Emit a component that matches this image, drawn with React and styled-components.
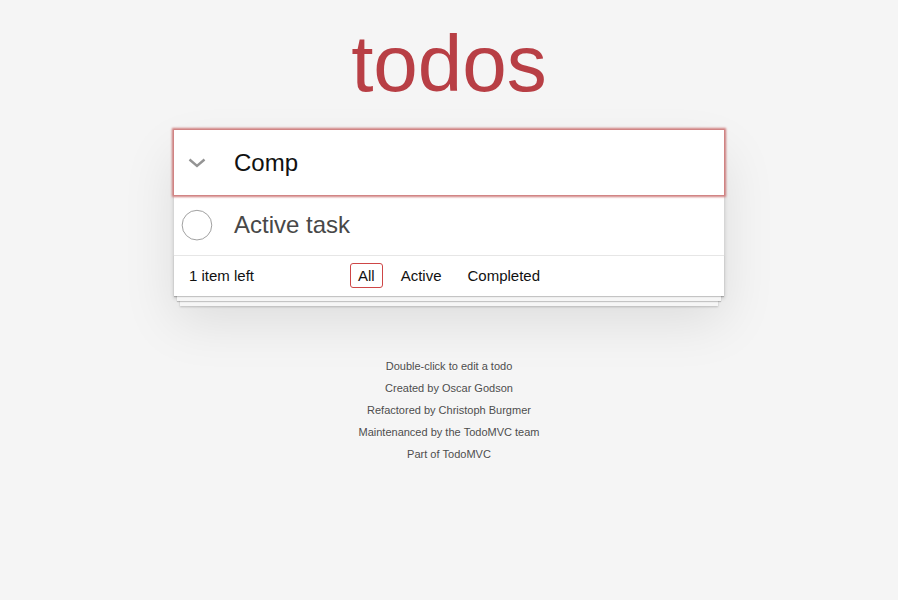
import { useState } from "react";
import styled, { createGlobalStyle } from "styled-components";

const GlobalStyle = createGlobalStyle`
  html,
  body {
    margin: 0;
    padding: 0;
  }

  body {
    font: 14px "Liberation Sans", Helvetica, Arial, sans-serif;
    line-height: 1.4em;
    background: #f5f5f5;
    color: #111111;
    font-weight: 300;
  }
`;

const Page = styled.div`
  min-width: 230px;
  max-width: 550px;
  margin: 0 auto;
`;

const Title = styled.h1`
  margin: 0;
  padding-top: 24px;
  height: 106px;
  font-size: 80px;
  line-height: 80px;
  font-weight: 200;
  text-align: center;
  color: #b83f45;
`;

const TodoApp = styled.section`
  background: #fff;
  margin: 0 0 40px 0;
  box-shadow: 0 2px 4px 0 rgba(0, 0, 0, 0.2), 0 25px 50px 0 rgba(0, 0, 0, 0.1);
`;

const Header = styled.header`
  position: relative;
  z-index: 1;
  display: flex;
  height: 65px;
  background: #fff;
  box-shadow: ${(p) =>
    p.$focused ? "0 0 2px 2px #cf7d7d" : "inset 0 -2px 1px rgba(0, 0, 0, 0.03)"};
`;

const ToggleAll = styled.button`
  width: 45px;
  height: 65px;
  flex-shrink: 0;
  display: flex;
  align-items: center;
  justify-content: center;
  border: none;
  background: none;
  padding: 0;
  cursor: pointer;
`;

const NewTodo = styled.input`
  flex: 1;
  min-width: 0;
  height: 65px;
  box-sizing: border-box;
  padding: 16px 16px 16px 15px;
  border: none;
  outline: none;
  background: transparent;
  font-family: inherit;
  font-size: 24px;
  font-weight: inherit;
  line-height: 1.4em;
  color: inherit;
`;

const TodoList = styled.ul`
  margin: 0;
  padding: 0;
  list-style: none;
`;

const TodoItem = styled.li`
  display: flex;
  align-items: center;
  font-size: 24px;
  border-bottom: 1px solid #ededed;

  &:last-child {
    border-bottom: none;
  }
`;

const ItemToggle = styled.button`
  display: flex;
  width: 40px;
  height: 40px;
  flex-shrink: 0;
  margin-top: 1px;
  padding: 0;
  border: none;
  background: none;
  cursor: pointer;
`;

const ItemLabel = styled.label`
  flex: 1;
  padding: 16px 15px 15px 20px;
  line-height: 1.2;
  color: ${(p) => (p.$done ? "#949494" : "#484848")};
  text-decoration: ${(p) => (p.$done ? "line-through" : "none")};
  word-break: break-all;
`;

const Footer = styled.footer`
  display: grid;
  grid-template-columns: 1fr auto 1fr;
  align-items: center;
  height: 20px;
  padding: 10px 15px;
  font-size: 15px;
  border-top: 1px solid #e6e6e6;
  box-shadow: 0 1px 1px rgba(0, 0, 0, 0.2), 0 8px 0 -3px #f6f6f6,
    0 9px 1px -3px rgba(0, 0, 0, 0.2), 0 16px 0 -6px #f6f6f6,
    0 17px 2px -6px rgba(0, 0, 0, 0.2);
`;

const Count = styled.span`
  text-align: left;

  strong {
    font-weight: 300;
  }
`;

const Filters = styled.ul`
  display: flex;
  gap: 4px;
  margin: 0;
  padding: 0;
  list-style: none;
`;

const FilterLink = styled.a`
  color: inherit;
  margin: 3px;
  padding: 3px 7px;
  text-decoration: none;
  border: 1px solid ${(p) => (p.$selected ? "#ce4646" : "transparent")};
  border-radius: 3px;
  cursor: pointer;

  &:hover {
    border-color: ${(p) => (p.$selected ? "#ce4646" : "#db7676")};
  }
`;

const Info = styled.footer`
  margin: 65px auto 0;
  color: #4d4d4d;
  font-size: 11px;
  text-shadow: 0 1px 0 rgba(255, 255, 255, 0.5);
  text-align: center;

  p {
    line-height: 1;
    margin: 11px 0;
  }

  a {
    color: inherit;
    text-decoration: none;
    font-weight: 400;
  }
`;

const Chevron = () => (
  <svg width="18" height="10" viewBox="0 0 18 10">
    <polyline
      points="1.5,1.5 9,8 16.5,1.5"
      fill="none"
      stroke="#949494"
      strokeWidth="2.4"
    />
  </svg>
);

const Circle = ({ done }) => (
  <svg width="40" height="40" viewBox="-10 -18 100 135">
    <circle cx="50" cy="50" r="50" fill="none" stroke={done ? "#59a193" : "#949494"} strokeWidth="3" />
    {done && (
      <path d="M72 25L42 71 27 56l-4 4 20 20 34-52z" fill="#3ea390" />
    )}
  </svg>
);

const filters = ["All", "Active", "Completed"];

const App = () => {
  const [text, setText] = useState("Comp");
  const [filter, setFilter] = useState("All");
  const [todos, setTodos] = useState([{ id: 1, title: "Active task", done: false }]);

  const left = todos.filter((t) => !t.done).length;
  const shown = todos.filter((t) =>
    filter === "All" ? true : filter === "Active" ? !t.done : t.done
  );

  const toggle = (id) =>
    setTodos(todos.map((t) => (t.id === id ? { ...t, done: !t.done } : t)));

  const toggleAll = () => {
    const all = todos.every((t) => t.done);
    setTodos(todos.map((t) => ({ ...t, done: !all })));
  };

  const handleKey = (e) => {
    if (e.key === "Enter" && text.trim()) {
      setTodos([...todos, { id: Date.now(), title: text.trim(), done: false }]);
      setText("");
    }
  };

  return (
    <Page>
      <GlobalStyle />
      <Title>todos</Title>
      <TodoApp>
        <Header $focused>
          <ToggleAll onClick={toggleAll} aria-label="Toggle all">
            <Chevron />
          </ToggleAll>
          <NewTodo
            value={text}
            placeholder="What needs to be done?"
            onChange={(e) => setText(e.target.value)}
            onKeyDown={handleKey}
          />
        </Header>
        <TodoList>
          {shown.map((t) => (
            <TodoItem key={t.id}>
              <ItemToggle onClick={() => toggle(t.id)} aria-label="Toggle">
                <Circle done={t.done} />
              </ItemToggle>
              <ItemLabel $done={t.done}>{t.title}</ItemLabel>
            </TodoItem>
          ))}
        </TodoList>
        <Footer>
          <Count>
            <strong>{left}</strong> {left === 1 ? "item" : "items"} left
          </Count>
          <Filters>
            {filters.map((f) => (
              <li key={f}>
                <FilterLink $selected={filter === f} onClick={() => setFilter(f)}>
                  {f}
                </FilterLink>
              </li>
            ))}
          </Filters>
        </Footer>
      </TodoApp>
      <Info>
        <p>Double-click to edit a todo</p>
        <p>
          Created by <a>Oscar Godson</a>
        </p>
        <p>
          Refactored by <a>Christoph Burgmer</a>
        </p>
        <p>
          Maintenanced by the <a>TodoMVC team</a>
        </p>
        <p>
          Part of <a>TodoMVC</a>
        </p>
      </Info>
    </Page>
  );
};

export default App;
